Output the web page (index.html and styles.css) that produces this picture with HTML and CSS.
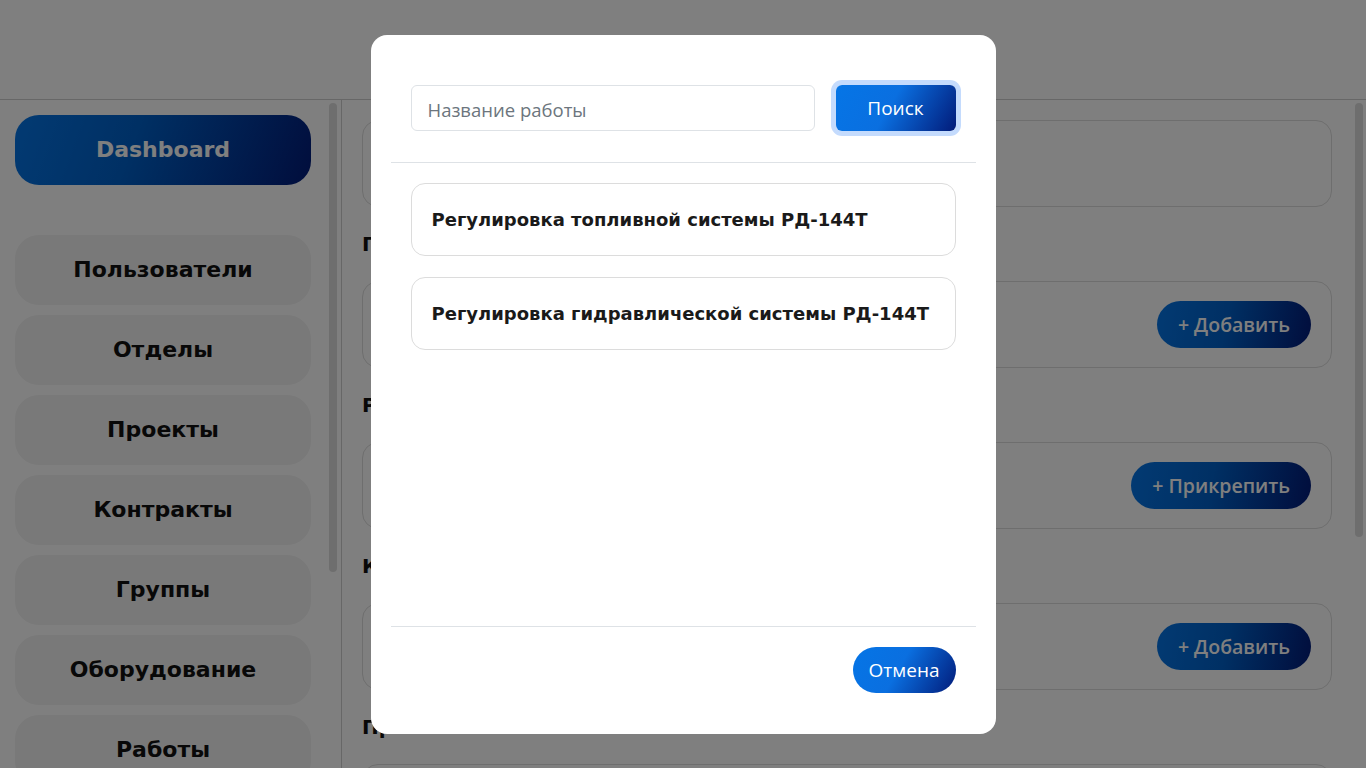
FILE: index.html
```html
<!DOCTYPE html>
<html lang="ru">
<head>
<meta charset="utf-8">
<title>Dashboard</title>
<link rel="stylesheet" href="styles.css">
</head>
<body>
<div class="app">
  <header class="topbar"></header>
  <div class="layout">
    <aside class="sidebar">
      <nav class="sidebar-content">
        <a class="nav-btn nav-primary">Dashboard</a>
        <div class="nav-list">
          <a class="nav-btn">Пользователи</a>
          <a class="nav-btn">Отделы</a>
          <a class="nav-btn">Проекты</a>
          <a class="nav-btn">Контракты</a>
          <a class="nav-btn">Группы</a>
          <a class="nav-btn">Оборудование</a>
          <a class="nav-btn">Работы</a>
          <a class="nav-btn">Отчёты</a>
          <a class="nav-btn">Настройки</a>
          <a class="nav-btn">Выход</a>
        </div>
      </nav>
      <div class="scroll-track sidebar-track"><div class="scroll-thumb sidebar-thumb"></div></div>
    </aside>
    <div class="main">
      <main class="main-content">
        <section class="card">
          <div class="card-text">Информация о группе</div>
        </section>
        <h3 class="section-title">Пользователи</h3>
        <section class="card">
          <div class="card-text">Нет пользователей</div>
          <button class="pill-btn">+ Добавить</button>
        </section>
        <h3 class="section-title">Работы</h3>
        <section class="card">
          <div class="card-text">Нет работ</div>
          <button class="pill-btn">+ Прикрепить</button>
        </section>
        <h3 class="section-title">Контракты</h3>
        <section class="card">
          <div class="card-text">Нет контрактов</div>
          <button class="pill-btn">+ Добавить</button>
        </section>
        <h3 class="section-title">Проекты</h3>
        <section class="card">
          <div class="card-text">Нет проектов</div>
          <button class="pill-btn">+ Добавить</button>
        </section>
      </main>
      <div class="scroll-track main-track"><div class="scroll-thumb main-thumb"></div></div>
    </div>
  </div>
</div>

<div class="overlay">
  <div class="modal">
    <div class="modal-search">
      <input class="search-input" type="text" placeholder="Название работы">
      <button class="search-btn">Поиск</button>
    </div>
    <div class="modal-body">
      <div class="work-item">Регулировка топливной системы РД-144Т</div>
      <div class="work-item">Регулировка гидравлической системы РД-144Т</div>
    </div>
    <div class="modal-footer">
      <button class="cancel-btn">Отмена</button>
    </div>
  </div>
</div>
</body>
</html>
```

FILE: styles.css
```css
* { box-sizing: border-box; }

html, body {
  margin: 0;
  height: 100%;
  overflow: hidden;
}

body {
  background: #ffffff;
  font-family: "Open Sans", "Noto Sans", sans-serif;
  color: #212529;
}

.app {
  display: flex;
  flex-direction: column;
  height: 100vh;
}

.topbar {
  height: 100px;
  flex: none;
  background: #ffffff;
  border-bottom: 1px solid #cfcfcf;
}

.layout {
  flex: 1;
  display: flex;
  min-height: 0;
}

/* Sidebar */
.sidebar {
  width: 342px;
  flex: none;
  border-right: 1px solid #cfcfcf;
  overflow: hidden;
  display: flex;
}

.sidebar-content {
  width: 329px;
  flex: none;
  padding: 15px 18px 18px 15px;
  display: flex;
  flex-direction: column;
}

.nav-btn {
  display: flex;
  align-items: center;
  justify-content: center;
  height: 70px;
  flex: none;
  padding-bottom: 2px;
  border-radius: 24px;
  background: #f2f2f2;
  color: #111111;
  font-family: "DejaVu Sans", sans-serif;
  font-weight: 700;
  font-size: 22px;
  text-decoration: none;
}

.nav-primary {
  background: linear-gradient(110deg, #0575e6 0%, #0160c8 40%, #021b79 100%);
  color: #ffffff;
}

.nav-list {
  margin-top: 50px;
  display: flex;
  flex-direction: column;
  gap: 10px;
}

/* Decorative scrollbars */
.scroll-track {
  width: 12px;
  flex: none;
  padding: 3px 0;
}

.scroll-thumb {
  width: 8px;
  background: #dcdcdc;
  border-radius: 4px;
}

.sidebar-thumb { height: 469px; }

.main-track { padding-left: 1px; }
.main-thumb { height: 434px; }

/* Main */
.main {
  flex: 1;
  display: flex;
  overflow: hidden;
}

.main-content {
  flex: 1;
  padding: 20px 22px 0 20px;
}

.card {
  height: 87px;
  border: 1px solid #dcdcdc;
  border-radius: 16px;
  padding: 0 20px;
  display: flex;
  align-items: center;
  justify-content: space-between;
}

.card-text {
  font-size: 18px;
}

.section-title {
  margin: 0;
  height: 74px;
  display: flex;
  align-items: center;
  font-family: "DejaVu Sans", sans-serif;
  font-weight: 700;
  font-size: 20px;
  color: #111111;
}

.pill-btn {
  height: 47px;
  padding: 0 21px;
  border: none;
  border-radius: 24px;
  background: linear-gradient(100deg, #0575e6 0%, #0160c8 45%, #021b79 100%);
  color: #ffffff;
  font-family: "Open Sans", sans-serif;
  font-weight: 600;
  font-size: 19.5px;
}

/* Modal */
.overlay {
  position: fixed;
  inset: 0;
  background: rgba(0, 0, 0, 0.5);
  display: flex;
  align-items: center;
  justify-content: center;
}

.modal {
  width: 625px;
  height: 699px;
  background: #ffffff;
  border-radius: 16px;
  display: flex;
  flex-direction: column;
  padding: 50px 20px 41px;
}

.modal-search {
  display: flex;
  align-items: center;
  gap: 21px;
  padding: 0 20px 31px;
  border-bottom: 1px solid #dee2e6;
}

.search-input {
  flex: 1;
  height: 46px;
  border: 1px solid #dee2e6;
  border-radius: 6px;
  padding: 3px 16px 0;
  font-family: "Open Sans", sans-serif;
  font-size: 18.5px;
  color: #212529;
  outline: none;
}

.search-input::placeholder {
  color: #6c757d;
}

.search-btn {
  width: 120px;
  height: 46px;
  border: none;
  border-radius: 6px;
  background: linear-gradient(120deg, #0575e6 0%, #0a6fe0 45%, #021b79 100%);
  color: #ffffff;
  font-family: "Open Sans", sans-serif;
  font-size: 19px;
  box-shadow: 0 0 0 5px #c4dbfd;
}

.modal-body {
  flex: 1;
  padding: 20px 20px 0;
  display: flex;
  flex-direction: column;
  gap: 21px;
  border-bottom: 1px solid #dee2e6;
}

.work-item {
  height: 73px;
  border: 1px solid #dcdcdc;
  border-radius: 14px;
  padding: 0 20px;
  display: flex;
  align-items: center;
  font-family: "DejaVu Sans", sans-serif;
  font-weight: 700;
  font-size: 18px;
  color: #1a1a1a;
}

.modal-footer {
  display: flex;
  justify-content: flex-end;
  padding: 20px 20px 0;
}

.cancel-btn {
  height: 46px;
  padding: 0 16px;
  border: none;
  border-radius: 23px;
  background: linear-gradient(120deg, #0575e6 0%, #0a6fe0 45%, #021b79 100%);
  color: #ffffff;
  font-family: "Open Sans", sans-serif;
  font-size: 19px;
}
```
